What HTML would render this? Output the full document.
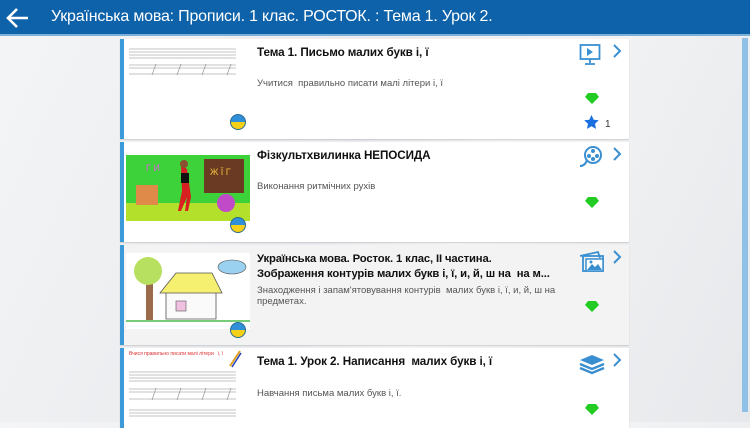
<!DOCTYPE html>
<html><head><meta charset="utf-8"><style>
*{margin:0;padding:0;box-sizing:border-box}
body{width:750px;height:422px;overflow:hidden;background:linear-gradient(115deg,#f4f5f6 0%,#e9ebee 45%,#f3f4f5 60%,#e6e8eb 100%);font-family:"Liberation Sans",sans-serif;position:relative}
.hdr{position:absolute;left:0;top:0;width:750px;height:36px;background:#0e62a9;border-bottom:2px solid #7fb0d8}
.hdr .t{position:absolute;left:51px;top:8px;color:#fff;font-size:16px;white-space:nowrap;letter-spacing:-.2px}
.card{position:absolute;left:120px;width:509px;height:100px;background:#fff;border-left:4px solid #3d9ad9;box-shadow:0 1px 1px rgba(0,0,0,.15)}
.card.g{background:#f3f3f3}
.img{position:absolute;left:2px}
.ti{position:absolute;left:133px;top:6px;font-size:11.7px;color:#111;font-weight:bold;line-height:15px;white-space:nowrap;letter-spacing:-.1px}
.ds{position:absolute;left:133px;font-size:9.5px;color:#555;line-height:11px;width:300px}
.flag{position:absolute;left:106px;width:16px;height:16px;border-radius:50%;border:1.5px solid #2a6b8d;background:linear-gradient(#2f8fd8 50%,#f4d018 50%)}
.ic{position:absolute;left:455px;top:4px}
.chev{position:absolute;left:488px;top:4px}
.gem{position:absolute;left:461px}
.sb{position:absolute;left:742px;top:38px;width:6px;height:374px;background:#8fc0e6}
</style></head><body>
<div class="hdr">
<svg style="position:absolute;left:6px;top:7px" width="24" height="22" viewBox="0 0 24 22"><path d="M22 11H3M11 2L2 11l9 9" stroke="#fff" stroke-width="2.6" fill="none"/></svg>
<div class="t">Українська мова: Прописи. 1 клас. РОСТОК. : Тема 1. Урок 2.</div>
</div>

<div class="card" style="top:39px">
<svg class="img" style="top:8px" width="112" height="30"><g stroke="#888" stroke-width=".6"><line x1="3" y1="2" x2="110" y2="2"/><line x1="3" y1="5" x2="110" y2="5"/><line x1="3" y1="8" x2="110" y2="8"/><line x1="3" y1="11" x2="110" y2="11"/><line x1="3" y1="18" x2="110" y2="18"/><line x1="3" y1="21" x2="110" y2="21"/><line x1="3" y1="27" x2="110" y2="27"/><line x1="30" y1="17" x2="26" y2="28"/><line x1="55" y1="17" x2="51" y2="28"/><line x1="80" y1="17" x2="76" y2="28"/><line x1="105" y1="17" x2="101" y2="28"/></g></svg>
<div class="ti">Тема 1. Письмо малих букв і, ї</div>
<div class="ds" style="top:39px">Учитися&nbsp; правильно писати малі літери і, ї</div>
<div class="flag" style="top:75px"></div>
<svg class="ic" width="22" height="24" viewBox="0 0 22 24"><rect x="1.5" y="2" width="19" height="14" fill="none" stroke="#3a8fd0" stroke-width="1.8"/><path d="M8 5v8l6-4z" fill="#3a8fd0"/><path d="M11 16v4M6 21h10" stroke="#3a8fd0" stroke-width="1.8"/></svg>
<svg class="chev" width="10" height="16"><path d="M2 2l6 6-6 6" stroke="#3a8fd0" stroke-width="2" fill="none"/></svg>
<svg class="gem" style="top:54px" width="14" height="11"><path d="M3 0h8l3 4-7 7-7-7z" fill="#22cc22"/></svg>
<svg style="position:absolute;left:460px;top:76px" width="15" height="14"><path d="M7.5 0l2.2 4.7 5.1.6-3.8 3.5 1 5.1-4.5-2.6-4.5 2.6 1-5.1L.2 5.3l5.1-.6z" fill="#1a6fe0"/></svg>
<div style="position:absolute;left:481px;top:80px;font-size:10px;color:#333">1</div>
</div>

<div class="card" style="top:142px">
<svg class="img" style="top:13px" width="124" height="66"><rect width="124" height="66" fill="#3dd23a"/><rect x="0" y="48" width="124" height="18" fill="#b3e02a"/><rect x="78" y="4" width="40" height="34" fill="#6b3a22"/><rect x="10" y="30" width="22" height="20" fill="#e08a4a"/><circle cx="100" cy="48" r="9" fill="#c04ac8"/><path d="M55 10l6 4 4 28-3 14h-3l2-14-6 14h-3l4-20z" fill="#d82020"/><circle cx="58" cy="9" r="4" fill="#8a5030"/><rect x="55" y="18" width="8" height="10" fill="#111"/><text x="84" y="20" font-size="9" fill="#f0c040" font-family="Liberation Sans">Ж Ї Г</text><text x="20" y="16" font-size="9" fill="#e060e0" font-family="Liberation Sans">Г И</text></svg>
<div class="ti">Фізкультхвилинка НЕПОСИДА</div>
<div class="ds" style="top:39px">Виконання ритмічних рухів</div>
<div class="flag" style="top:75px"></div>
<svg class="ic" width="24" height="22" viewBox="0 0 24 22"><circle cx="14" cy="9" r="8" fill="none" stroke="#3a8fd0" stroke-width="2"/><circle cx="14" cy="5" r="2" fill="#3a8fd0"/><circle cx="10" cy="10" r="2" fill="#3a8fd0"/><circle cx="18" cy="10" r="2" fill="#3a8fd0"/><circle cx="14" cy="13" r="2" fill="#3a8fd0"/><path d="M1 20c4 0 6-3 7-6" stroke="#3a8fd0" stroke-width="2" fill="none"/></svg>
<svg class="chev" width="10" height="16"><path d="M2 2l6 6-6 6" stroke="#3a8fd0" stroke-width="2" fill="none"/></svg>
<svg class="gem" style="top:55px" width="14" height="11"><path d="M3 0h8l3 4-7 7-7-7z" fill="#22cc22"/></svg>
</div>

<div class="card g" style="top:245px">
<svg class="img" style="top:8px" width="124" height="76"><rect width="124" height="76" fill="#fff"/><rect x="20" y="25" width="7" height="42" fill="#9a6a4a"/><circle cx="22" cy="18" r="14" fill="#b8e060"/><path d="M40 36h50v30H40z" fill="#fafafa" stroke="#555" stroke-width=".8"/><path d="M34 40l16-20h36l10 20z" fill="#f6f070" stroke="#555" stroke-width=".8"/><rect x="50" y="48" width="10" height="10" fill="#f0c0e0" stroke="#555" stroke-width=".6"/><ellipse cx="106" cy="14" rx="14" ry="7" fill="#9ad0f0" stroke="#555" stroke-width=".6"/><path d="M0 68h124" stroke="#7c7" stroke-width="2"/></svg>
<div class="ti" style="top:7px;font-size:11.3px;letter-spacing:-.15px">Українська мова. Росток. 1 клас, ІІ частина.<br>Зображення контурів малих букв і, ї, и, й, ш на&nbsp; на м...</div>
<div class="ds" style="top:40px">Знаходження і запам'ятовування контурів&nbsp; малих букв і, ї, и, й, ш на предметах.</div>
<div class="flag" style="top:77px"></div>
<svg class="ic" style="top:5px" width="28" height="24" viewBox="0 0 28 24"><path d="M1 6l18-4 2 6" fill="none" stroke="#3a8fd0" stroke-width="1.8"/><rect x="4" y="6" width="20" height="15" fill="none" stroke="#3a8fd0" stroke-width="1.8"/><rect x="7" y="9" width="17" height="12" fill="#fff" stroke="#3a8fd0" stroke-width="1.5"/><path d="M8 20l5-6 3 3 3-3 4 6z" fill="#3a8fd0"/><circle cx="12" cy="12" r="1.5" fill="#3a8fd0"/></svg>
<svg class="chev" width="10" height="16"><path d="M2 2l6 6-6 6" stroke="#3a8fd0" stroke-width="2" fill="none"/></svg>
<svg class="gem" style="top:56px" width="14" height="11"><path d="M3 0h8l3 4-7 7-7-7z" fill="#22cc22"/></svg>
</div>

<div class="card" style="top:348px;height:80px">
<div style="position:absolute;left:5px;top:3px;font-size:5px;color:#d33">Вчися правильно писати малі літери &nbsp; і, ї</div>
<svg style="position:absolute;left:104px;top:2px" width="14" height="18"><path d="M12 1L2 16" stroke="#e0a020" stroke-width="2"/><path d="M13 3L4 17" stroke="#2040c0" stroke-width="1.5"/></svg>
<svg class="img" style="top:22px" width="112" height="52"><g stroke="#888" stroke-width=".6"><line x1="3" y1="2" x2="110" y2="2"/><line x1="3" y1="5" x2="110" y2="5"/><line x1="3" y1="8" x2="110" y2="8"/><line x1="3" y1="11" x2="110" y2="11"/><line x1="3" y1="19" x2="110" y2="19"/><line x1="3" y1="22" x2="110" y2="22"/><line x1="3" y1="29" x2="110" y2="29"/><line x1="3" y1="40" x2="110" y2="40"/><line x1="3" y1="43" x2="110" y2="43"/><line x1="3" y1="46" x2="110" y2="46"/><line x1="30" y1="18" x2="26" y2="30"/><line x1="55" y1="18" x2="51" y2="30"/><line x1="80" y1="18" x2="76" y2="30"/><line x1="105" y1="18" x2="101" y2="30"/></g></svg>
<div class="ti">Тема 1. Урок 2. Написання&nbsp; малих букв і, ї</div>
<div class="ds" style="top:40px">Навчання письма малих букв і, ї.</div>
<svg class="ic" style="top:6px" width="26" height="22" viewBox="0 0 26 22"><path d="M13 1l12 5-12 5L1 6z" fill="#3a8fd0"/><path d="M1 10l12 5 12-5M1 14l12 5 12-5" stroke="#3a8fd0" stroke-width="2.4" fill="none"/></svg>
<svg class="chev" width="10" height="16"><path d="M2 2l6 6-6 6" stroke="#3a8fd0" stroke-width="2" fill="none"/></svg>
<svg class="gem" style="top:56px" width="14" height="11"><path d="M3 0h8l3 4-7 7-7-7z" fill="#22cc22"/></svg>
</div>
<div class="sb"></div>
</body></html>
